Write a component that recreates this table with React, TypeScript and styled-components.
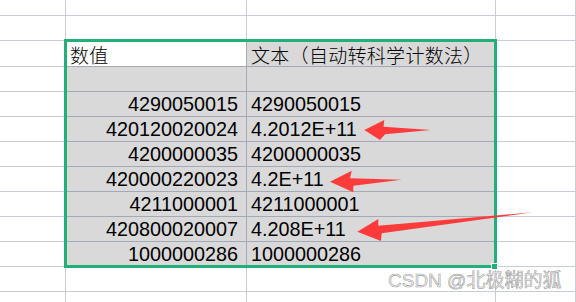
import { createGlobalStyle } from 'styled-components'
import styled from 'styled-components'

const GlobalStyle = createGlobalStyle`
  html, body {
    margin: 0;
    padding: 0;
    background: #fff;
  }
`

const LIGHT = '#c9cdd8'
const DARK = '#a4a9b7'
const FILL = '#d9d9d9'
const GREEN = '#21b07a'

const Sheet = styled.div`
  position: relative;
  width: 576px;
  height: 302px;
  overflow: hidden;
  background: #fff;
  font-family: 'Liberation Sans', Arial, 'Noto Sans CJK SC', sans-serif;
`

const Row = styled.div<{ $h: number }>`
  display: grid;
  grid-template-columns: 66px 181px 249px 1fr;
  height: ${(p) => p.$h}px;
`

const Cell = styled.div<{ $fill?: boolean; $dark?: boolean; $right?: boolean; $cjk?: boolean }>`
  box-sizing: border-box;
  display: flex;
  align-items: flex-end;
  justify-content: ${(p) => (p.$right ? 'flex-end' : 'flex-start')};
  padding: ${(p) => (p.$right ? '0 8px 1px 0' : p.$cjk ? '0 0 2px 4px' : '0 0 1px 4px')};
  background: ${(p) => (p.$fill ? FILL : '#fff')};
  border-right: 1px solid ${(p) => (p.$dark ? DARK : LIGHT)};
  border-bottom: 1px solid ${(p) => (p.$dark ? DARK : LIGHT)};
  color: #000;
  font-size: ${(p) => (p.$cjk ? '19px' : '19.8px')};
  letter-spacing: ${(p) => (p.$cjk ? '0.3px' : '0')};
  font-family: ${(p) =>
    p.$cjk
      ? "'Noto Sans CJK SC', sans-serif"
      : "'Liberation Sans', Arial, sans-serif"};
  font-weight: ${(p) => (p.$cjk ? 300 : 400)};
  line-height: 1;
  white-space: nowrap;
  overflow: visible;
`

const Selection = styled.div`
  position: absolute;
  left: 64px;
  top: 39px;
  width: 433px;
  height: 229px;
  box-sizing: border-box;
  border: 3px solid ${GREEN};
  pointer-events: none;
`

const FillHandle = styled.div`
  position: absolute;
  left: 492px;
  top: 264px;
  width: 5px;
  height: 5px;
  background: ${GREEN};
  outline: 1px solid #fff;
`

const Arrows = styled.svg`
  position: absolute;
  left: 0;
  top: 0;
  pointer-events: none;
`

const Watermark = styled.div`
  position: absolute;
  left: 388px;
  top: 271px;
  font-family: 'Liberation Sans', Arial, 'Noto Sans CJK SC', sans-serif;
  font-size: 19px;
  line-height: 1;
  color: rgba(240, 240, 240, 0.9);
  -webkit-text-stroke: 0.6px rgba(130, 130, 130, 0.75);
  white-space: nowrap;
`

type Line = { h: number; kind: 'blank' | 'header' | 'empty' | 'data'; num?: string; text?: string }

const lines: Line[] = [
  { h: 16, kind: 'blank' },
  { h: 25, kind: 'blank' },
  { h: 26, kind: 'header' },
  { h: 25, kind: 'empty' },
  { h: 25, kind: 'data', num: '4290050015', text: '4290050015' },
  { h: 25, kind: 'data', num: '420120020024', text: '4.2012E+11' },
  { h: 25, kind: 'data', num: '4200000035', text: '4200000035' },
  { h: 25, kind: 'data', num: '420000220023', text: '4.2E+11' },
  { h: 25, kind: 'data', num: '4211000001', text: '4211000001' },
  { h: 25, kind: 'data', num: '420800020007', text: '4.208E+11' },
  { h: 25, kind: 'data', num: '1000000286', text: '1000000286' },
  { h: 25, kind: 'blank' },
  { h: 20, kind: 'blank' },
]

const arrows = [
  '364.3,130 384.3,120 383.5,126.7 431,130 385,134.3 380,140',
  '330,181.7 351.7,170.7 350,178.3 401.7,179.7 353.3,185.7 353.3,192.3',
  '357.3,231.7 378.3,219 378.3,225.7 532.7,212.3 381.7,233.3 381,241',
]

export default function App() {
  return (
    <>
      <GlobalStyle />
      <Sheet>
        {lines.map((l, i) => {
          const inTable = l.kind !== 'blank'
          return (
            <Row key={i} $h={l.h}>
              <Cell />
              {l.kind === 'header' ? (
                <Cell $dark $cjk>
                  数值
                </Cell>
              ) : (
                <Cell $fill={inTable} $dark={inTable} $right>
                  {l.num}
                </Cell>
              )}
              {l.kind === 'header' ? (
                <Cell $fill $dark $cjk>
                  文本（自动转科学计数法）
                </Cell>
              ) : (
                <Cell $fill={inTable} $dark={inTable}>
                  {l.text}
                </Cell>
              )}
              <Cell />
            </Row>
          )
        })}
        <Selection />
        <FillHandle />
        <Arrows width={576} height={302} viewBox="0 0 576 302">
          {arrows.map((pts) => (
            <polygon key={pts} points={pts} fill="#fe3b3b" />
          ))}
        </Arrows>
        <Watermark>CSDN @北极糊的狐</Watermark>
      </Sheet>
    </>
  )
}
